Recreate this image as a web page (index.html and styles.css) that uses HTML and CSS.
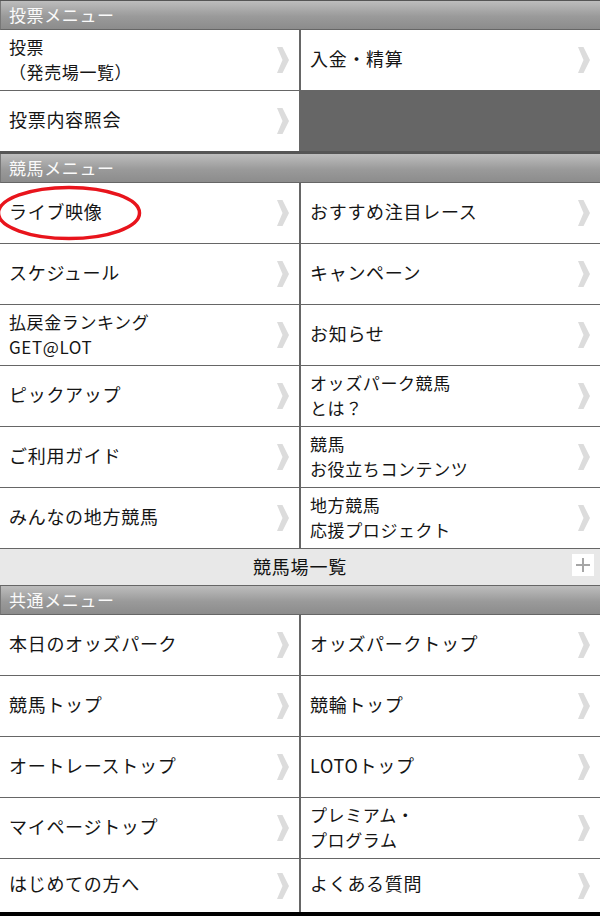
FILE: index.html
```html
<!DOCTYPE html>
<html lang="ja">
<head>
<meta charset="utf-8">
<link rel="stylesheet" href="styles.css">
</head>
<body>
<div class="menu">
  <div class="sec-head">投票メニュー</div>
  <div class="grid grid-thick">
    <a class="cell"><span class="txt two">投票<br>（発売場一覧）</span><svg class="chev" viewBox="0 0 12 26"><polygon points="0,0 5.5,0 12,13 5.5,26 0,26 5.5,13"/></svg></a>
    <a class="cell"><span class="txt">入金・精算</span><svg class="chev" viewBox="0 0 12 26"><polygon points="0,0 5.5,0 12,13 5.5,26 0,26 5.5,13"/></svg></a>
    <a class="cell"><span class="txt">投票内容照会</span><svg class="chev" viewBox="0 0 12 26"><polygon points="0,0 5.5,0 12,13 5.5,26 0,26 5.5,13"/></svg></a>
    <div class="cell empty"></div>
  </div>

  <div class="sec-head">競馬メニュー</div>
  <div class="grid">
    <a class="cell live"><span class="txt">ライブ映像</span><svg class="chev" viewBox="0 0 12 26"><polygon points="0,0 5.5,0 12,13 5.5,26 0,26 5.5,13"/></svg><svg class="circle" viewBox="0 0 146 56"><ellipse cx="73" cy="28" rx="70.5" ry="25.5"/></svg></a>
    <a class="cell"><span class="txt">おすすめ注目レース</span><svg class="chev" viewBox="0 0 12 26"><polygon points="0,0 5.5,0 12,13 5.5,26 0,26 5.5,13"/></svg></a>
    <a class="cell"><span class="txt">スケジュール</span><svg class="chev" viewBox="0 0 12 26"><polygon points="0,0 5.5,0 12,13 5.5,26 0,26 5.5,13"/></svg></a>
    <a class="cell"><span class="txt">キャンペーン</span><svg class="chev" viewBox="0 0 12 26"><polygon points="0,0 5.5,0 12,13 5.5,26 0,26 5.5,13"/></svg></a>
    <a class="cell"><span class="txt two">払戻金ランキング<br>GET@LOT</span><svg class="chev" viewBox="0 0 12 26"><polygon points="0,0 5.5,0 12,13 5.5,26 0,26 5.5,13"/></svg></a>
    <a class="cell"><span class="txt">お知らせ</span><svg class="chev" viewBox="0 0 12 26"><polygon points="0,0 5.5,0 12,13 5.5,26 0,26 5.5,13"/></svg></a>
    <a class="cell"><span class="txt">ピックアップ</span><svg class="chev" viewBox="0 0 12 26"><polygon points="0,0 5.5,0 12,13 5.5,26 0,26 5.5,13"/></svg></a>
    <a class="cell"><span class="txt two">オッズパーク競馬<br>とは？</span><svg class="chev" viewBox="0 0 12 26"><polygon points="0,0 5.5,0 12,13 5.5,26 0,26 5.5,13"/></svg></a>
    <a class="cell"><span class="txt">ご利用ガイド</span><svg class="chev" viewBox="0 0 12 26"><polygon points="0,0 5.5,0 12,13 5.5,26 0,26 5.5,13"/></svg></a>
    <a class="cell"><span class="txt two">競馬<br>お役立ちコンテンツ</span><svg class="chev" viewBox="0 0 12 26"><polygon points="0,0 5.5,0 12,13 5.5,26 0,26 5.5,13"/></svg></a>
    <a class="cell"><span class="txt">みんなの地方競馬</span><svg class="chev" viewBox="0 0 12 26"><polygon points="0,0 5.5,0 12,13 5.5,26 0,26 5.5,13"/></svg></a>
    <a class="cell"><span class="txt two">地方競馬<br>応援プロジェクト</span><svg class="chev" viewBox="0 0 12 26"><polygon points="0,0 5.5,0 12,13 5.5,26 0,26 5.5,13"/></svg></a>
  </div>

  <div class="bar">
    <span class="bar-txt">競馬場一覧</span>
    <span class="plus"><svg viewBox="0 0 22 22"><path d="M11 4V18M4 11H18"/></svg></span>
  </div>

  <div class="sec-head">共通メニュー</div>
  <div class="grid grid-last">
    <a class="cell"><span class="txt">本日のオッズパーク</span><svg class="chev" viewBox="0 0 12 26"><polygon points="0,0 5.5,0 12,13 5.5,26 0,26 5.5,13"/></svg></a>
    <a class="cell"><span class="txt">オッズパークトップ</span><svg class="chev" viewBox="0 0 12 26"><polygon points="0,0 5.5,0 12,13 5.5,26 0,26 5.5,13"/></svg></a>
    <a class="cell"><span class="txt">競馬トップ</span><svg class="chev" viewBox="0 0 12 26"><polygon points="0,0 5.5,0 12,13 5.5,26 0,26 5.5,13"/></svg></a>
    <a class="cell"><span class="txt">競輪トップ</span><svg class="chev" viewBox="0 0 12 26"><polygon points="0,0 5.5,0 12,13 5.5,26 0,26 5.5,13"/></svg></a>
    <a class="cell"><span class="txt">オートレーストップ</span><svg class="chev" viewBox="0 0 12 26"><polygon points="0,0 5.5,0 12,13 5.5,26 0,26 5.5,13"/></svg></a>
    <a class="cell"><span class="txt">LOTOトップ</span><svg class="chev" viewBox="0 0 12 26"><polygon points="0,0 5.5,0 12,13 5.5,26 0,26 5.5,13"/></svg></a>
    <a class="cell"><span class="txt">マイページトップ</span><svg class="chev" viewBox="0 0 12 26"><polygon points="0,0 5.5,0 12,13 5.5,26 0,26 5.5,13"/></svg></a>
    <a class="cell"><span class="txt two">プレミアム・<br>プログラム</span><svg class="chev" viewBox="0 0 12 26"><polygon points="0,0 5.5,0 12,13 5.5,26 0,26 5.5,13"/></svg></a>
    <a class="cell"><span class="txt">はじめての方へ</span><svg class="chev" viewBox="0 0 12 26"><polygon points="0,0 5.5,0 12,13 5.5,26 0,26 5.5,13"/></svg></a>
    <a class="cell"><span class="txt">よくある質問</span><svg class="chev" viewBox="0 0 12 26"><polygon points="0,0 5.5,0 12,13 5.5,26 0,26 5.5,13"/></svg></a>
  </div>
</div>
</body>
</html>
```

FILE: styles.css
```css
html, body {
  margin: 0;
  padding: 0;
  background: #000;
}
body {
  width: 600px;
  height: 916px;
  overflow: hidden;
  font-family: "Noto Sans CJK JP", "Noto Sans", sans-serif;
}
.menu {
  background: #fff;
  border-top: 1px solid #555;
  display: flex;
  flex-direction: column;
}
.sec-head {
  height: 29px;
  box-sizing: border-box;
  padding-left: 8px;
  padding-bottom: 2px;
  display: flex;
  align-items: center;
  color: #fafafa;
  font-size: 17px;
  letter-spacing: 0.6px;
  background: linear-gradient(#bdbdbd, #9a9a9a 55%, #8c8c8c);
  border-bottom: 1px solid #666;
  border-left: 1px solid #777;
}
.grid {
  display: grid;
  grid-template-columns: 299px 1fr;
  grid-auto-rows: 60px;
  column-gap: 2px;
  row-gap: 1px;
  background: #666;
  border-bottom: 1px solid #666;
}
.grid-thick {
  border-bottom-width: 3px;
  border-bottom-color: #555;
}
.grid-last {
  grid-template-rows: 60px 60px 60px 60px 53px;
  border-bottom: 0;
}
.cell {
  position: relative;
  background: #fff;
  display: flex;
  align-items: center;
  justify-content: space-between;
  padding: 0 10px 0 9px;
  color: #151515;
  text-decoration: none;
}
.cell.empty {
  background: #666;
}
.txt {
  font-size: 18px;
  letter-spacing: 0.7px;
  line-height: 25px;
  white-space: nowrap;
  margin-bottom: 4px;
}
.txt.two {
  font-size: 17px;
  letter-spacing: 0.6px;
  line-height: 25px;
  margin-bottom: 3px;
}
.chev {
  width: 12px;
  height: 26px;
  flex: none;
  fill: #dcdcdc;
}
.circle {
  position: absolute;
  left: -4px;
  top: 2px;
  width: 146px;
  height: 56px;
  overflow: visible;
}
.circle ellipse {
  fill: none;
  stroke: #e8141c;
  stroke-width: 3.5px;
}
.bar {
  position: relative;
  height: 36px;
  background: #e8e8e8;
  border-bottom: 1px solid #666;
  display: flex;
  align-items: center;
  justify-content: center;
}
.bar-txt {
  font-size: 18px;
  letter-spacing: 0.8px;
  color: #111;
  margin-bottom: 3px;
}
.plus {
  position: absolute;
  right: 6px;
  top: 5px;
  width: 22px;
  height: 22px;
  background: #fff;
}
.plus svg {
  width: 22px;
  height: 22px;
  display: block;
}
.plus path {
  stroke: #a6a6a6;
  stroke-width: 2px;
  fill: none;
}
```
